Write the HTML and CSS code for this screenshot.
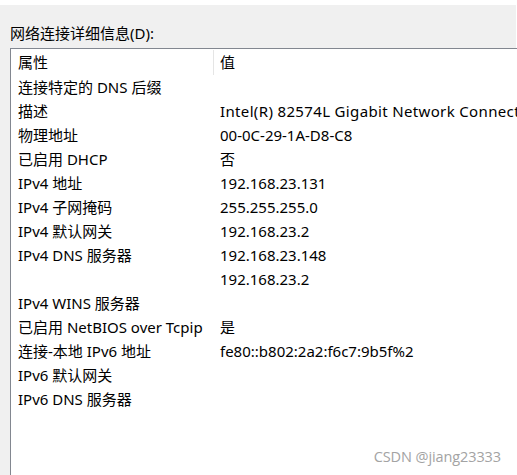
FILE: index.html
```html
<!DOCTYPE html>
<html lang="zh-CN">
<head>
<meta charset="utf-8">
<title>网络连接详细信息</title>
<link rel="stylesheet" href="styles.css">
</head>
<body>
<div class="top-strip"></div>
<div class="panel">
  <div class="caption">网络连接详细信息(D):</div>
  <div class="listbox">
    <div class="grid">
      <div class="head head-prop">属性</div>
      <div class="head head-val">值</div>

      <div class="k">连接特定的 DNS 后缀</div><div class="v"></div>
      <div class="k">描述</div><div class="v wide">Intel(R) 82574L Gigabit Network Connection</div>
      <div class="k">物理地址</div><div class="v">00-0C-29-1A-D8-C8</div>
      <div class="k">已启用 DHCP</div><div class="v">否</div>
      <div class="k">IPv4 地址</div><div class="v">192.168.23.131</div>
      <div class="k">IPv4 子网掩码</div><div class="v">255.255.255.0</div>
      <div class="k">IPv4 默认网关</div><div class="v">192.168.23.2</div>
      <div class="k">IPv4 DNS 服务器</div><div class="v">192.168.23.148</div>
      <div class="k"></div><div class="v">192.168.23.2</div>
      <div class="k">IPv4 WINS 服务器</div><div class="v"></div>
      <div class="k">已启用 NetBIOS over Tcpip</div><div class="v">是</div>
      <div class="k">连接-本地 IPv6 地址</div><div class="v">fe80::b802:2a2:f6c7:9b5f%2</div>
      <div class="k">IPv6 默认网关</div><div class="v"></div>
      <div class="k">IPv6 DNS 服务器</div><div class="v"></div>
    </div>
  </div>
</div>
<div class="watermark">CSDN @jiang23333</div>
</body>
</html>
```

FILE: styles.css
```css
html, body {
  margin: 0;
  padding: 0;
}
body {
  width: 517px;
  height: 475px;
  overflow: hidden;
  background: #f0f0f0;
  font-family: "Noto Sans", "Noto Sans CJK SC", sans-serif;
  font-size: 15px;
  color: #000;
  position: relative;
}
.top-strip {
  height: 5px;
  background: #fff;
}
.panel {
  border-right: 1px solid #fff;
  height: 470px;
  display: flex;
  flex-direction: column;
}
.caption {
  padding: 18px 0 5px 10px;
  line-height: 20px;
  height: 20px;
  white-space: nowrap;
}
.listbox {
  margin-left: 10px;
  margin-right: -2px;
  flex: 1;
  background: #fff;
  border: 1px solid #828790;
  border-right: none;
  border-bottom: none;
  overflow: hidden;
}
.grid {
  display: grid;
  grid-template-columns: 202px 1fr;
  grid-template-rows: 26px;
  grid-auto-rows: 24px;
}
.head {
  height: 26px;
  line-height: 26px;
  white-space: nowrap;
  grid-row: 1;
}
.head-prop {
  padding-left: 7px;
}
.head-val {
  border-left: 1px solid #e5e5e5;
  padding-left: 6px;
  height: 25px;
  margin-top: 1px;
  line-height: 24px;
}
.k, .v {
  line-height: 24px;
  white-space: nowrap;
  overflow: hidden;
}
.k {
  padding-left: 7px;
}
.v {
  padding-left: 7px;
}
.wide {
  letter-spacing: 0.35px;
}
.watermark {
  position: absolute;
  right: 16px;
  bottom: 9px;
  font-family: "Open Sans", sans-serif;
  font-size: 14.5px;
  color: #a3a3a3;
  letter-spacing: -0.1px;
}
```
